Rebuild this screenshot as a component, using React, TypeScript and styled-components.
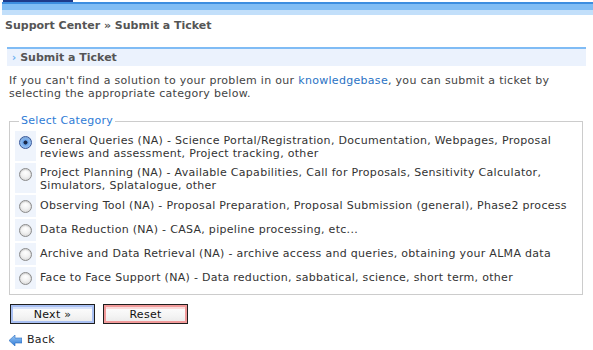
import React from 'react';
import styled, { createGlobalStyle } from 'styled-components';

const GlobalStyle = createGlobalStyle`
    body {
        margin: 0;
        background: #ffffff;
        font-family: "DejaVu Sans", Verdana, sans-serif;
        font-size: 11px;
        color: #333333;
    }
`;

const Page = styled.div`
    width: 593px;
    height: 350px;
    overflow: hidden;
    display: flex;
    flex-direction: column;
`;

const Masthead = styled.div`
    display: flex;
    flex-direction: column;
`;

const LogoEdge = styled.div`
    width: 70px;
    height: 2px;
    margin-left: 3px;
    background: #1d3c8c;
`;

const NavStrip = styled.div`
    margin-left: 2px;
    height: 11px;
    border-top: 2px solid #3c8ee0;
    background: linear-gradient(#80bdf4 0, #80bdf4 6px, #c2dffa 6px, #c2dffa 100%);
`;

const Breadcrumb = styled.div`
    margin: 4px 0 0 5px;
    font-weight: bold;
    font-size: 11px;
    line-height: 14px;
    color: #555555;
`;

const SectionHeader = styled.h2`
    display: flex;
    align-items: center;
    gap: 4px;
    margin: 14px 7px 0 7px;
    height: 17px;
    padding: 0 5px;
    border-top: 2px solid #80bcf5;
    background: #ebf2fd;
    font-size: 11px;
    font-weight: bold;
    color: #555555;
`;

const Chevron = styled.span`
    color: #68aef0;
    font-size: 10px;
    font-weight: bold;
`;

const Intro = styled.p`
    margin: 8px 0 0 9px;
    width: 560px;
    line-height: 13px;
    letter-spacing: 0.3px;
    color: #444444;
`;

const Link = styled.a`
    color: #2a72c4;
    text-decoration: none;
`;

const Fieldset = styled.fieldset`
    margin: 15px 10px 0 9px;
    padding: 2px 4px 3px 5px;
    border: 1px solid #cccccc;
    min-width: 0;
`;

const Legend = styled.legend`
    padding: 0 2px;
    margin-left: 4px;
    color: #2e7bd6;
    font-size: 11px;
    line-height: 12px;
    letter-spacing: 0.3px;
`;

const Options = styled.table`
    width: 100%;
    border-collapse: separate;
    border-spacing: 0 2px;
`;

const RadioCell = styled.td`
    width: 21px;
    padding: 0;
    background: #eff4fc;
    vertical-align: top;
`;

const LabelCell = styled.td<{ $lines: number }>`
    height: ${p => (p.$lines > 1 ? 30 : 22)}px;
    box-sizing: border-box;
    padding: ${p => (p.$lines > 1 ? '3px 4px 1px 4px' : '4px 4px 4px 4px')};
    line-height: ${p => (p.$lines > 1 ? 13 : 14)}px;
    letter-spacing: 0.3px;
    color: #333333;
    vertical-align: top;
`;

const Radio = styled.input.attrs({ type: 'radio' })`
    appearance: none;
    display: block;
    width: 13px;
    height: 13px;
    margin: 5px auto 0 auto;
    border-radius: 50%;
    border: 1px solid #8a8a8a;
    background: radial-gradient(circle at 50% 35%, #ffffff 0, #f2f2f2 45%, #cfcfcf 100%);
    box-shadow: inset 0 1px 1px rgba(0, 0, 0, 0.15);

    &:checked {
        border-color: #36579a;
        background: radial-gradient(circle at 50% 50%, #1b2a4a 0, #1b2a4a 22%, #6aa3ea 30%, #9cc6f5 70%, #4f86d4 100%);
    }
`;

const ButtonRow = styled.div`
    display: flex;
    gap: 8px;
    margin: 9px 0 0 10px;
`;

const Button = styled.button<{ $tone: 'blue' | 'red' }>`
    width: 85px;
    height: 20px;
    padding: 0;
    border: 1px solid #1e1e1e;
    background: linear-gradient(#ffffff, #f4f4f4 60%, #e9e9e9);
    box-shadow: inset 0 0 0 2px ${p => (p.$tone === 'blue' ? '#a9c0f3' : '#f19a9a')},
        inset 0 3px 0 1px ${p => (p.$tone === 'blue' ? '#d8e3fb' : '#fbdada')};
    font-family: "DejaVu Sans", Verdana, sans-serif;
    font-size: 11px;
    letter-spacing: 0.3px;
    color: #111111;
`;

const BackLink = styled.a`
    display: flex;
    align-items: center;
    gap: 5px;
    margin: 9px 0 0 9px;
    line-height: 14px;
    color: #222222;
    text-decoration: none;
    font-size: 11px;
    letter-spacing: 0.3px;
`;

const options: { title: string; lines: number }[] = [
    { title: 'General Queries (NA) - Science Portal/Registration, Documentation, Webpages, Proposal reviews and assessment, Project tracking, other', lines: 2 },
    { title: 'Project Planning (NA) - Available Capabilities, Call for Proposals, Sensitivity Calculator, Simulators, Splatalogue, other', lines: 2 },
    { title: 'Observing Tool (NA) - Proposal Preparation, Proposal Submission (general), Phase2 process', lines: 1 },
    { title: 'Data Reduction (NA) - CASA, pipeline processing, etc...', lines: 1 },
    { title: 'Archive and Data Retrieval (NA) - archive access and queries, obtaining your ALMA data', lines: 1 },
    { title: 'Face to Face Support (NA) - Data reduction, sabbatical, science, short term, other', lines: 1 },
];

const BackArrow: React.FC = () => (
    <svg width="13" height="11" viewBox="0 0 13 11">
        <defs>
            <linearGradient id="backFill" x1="0" y1="0" x2="0" y2="1">
                <stop offset="0" stopColor="#9ccaf7" />
                <stop offset="1" stopColor="#2f7ad6" />
            </linearGradient>
        </defs>
        <polygon points="0,5.5 6,0 6,3 13,3 13,8 6,8 6,11" fill="url(#backFill)" stroke="#2a6cc0" strokeWidth="0.6" />
    </svg>
);

const App: React.FC = () => {
    const [choice, setChoice] = React.useState(0);

    return (
        <Page>
            <GlobalStyle />
            <Masthead>
                <LogoEdge />
                <NavStrip />
            </Masthead>
            <Breadcrumb>Support Center » Submit a Ticket</Breadcrumb>
            <SectionHeader>
                <Chevron>›</Chevron>
                Submit a Ticket
            </SectionHeader>
            <Intro>
                If you can't find a solution to your problem in our <Link href="#">knowledgebase</Link>, you can submit a ticket by selecting the appropriate category below.
            </Intro>
            <Fieldset>
                <Legend>Select Category</Legend>
                <Options>
                    <tbody>
                        {options.map((o, i) => (
                            <tr key={o.title}>
                                <RadioCell>
                                    <Radio name="topic" checked={choice === i} onChange={() => setChoice(i)} />
                                </RadioCell>
                                <LabelCell $lines={o.lines}>{o.title}</LabelCell>
                            </tr>
                        ))}
                    </tbody>
                </Options>
            </Fieldset>
            <ButtonRow>
                <Button $tone="blue">Next »</Button>
                <Button $tone="red">Reset</Button>
            </ButtonRow>
            <BackLink href="#">
                <BackArrow />
                Back
            </BackLink>
        </Page>
    );
};

export default App;
